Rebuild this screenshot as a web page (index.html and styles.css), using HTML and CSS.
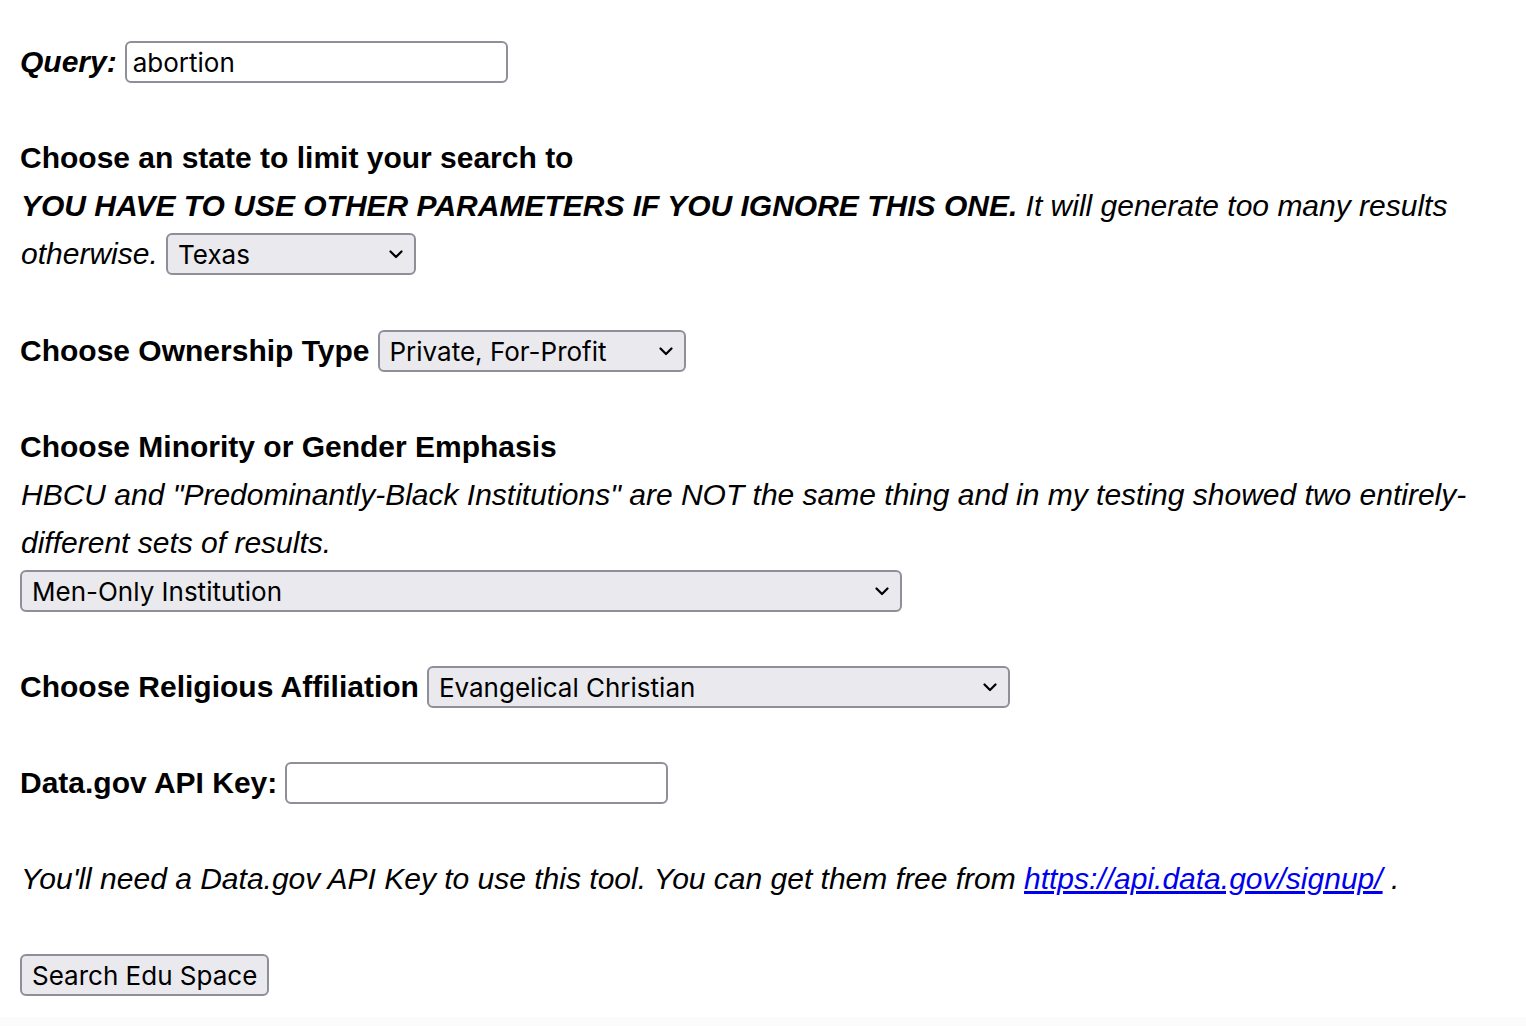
FILE: index.html
```html
<!DOCTYPE html>
<html lang="en">

<head>
    <meta charset="UTF-8">
    <meta name="viewport" content="width=device-width, initial-scale=1.0">
    <title>Edu Space Search</title>
    <link rel="stylesheet" href="styles.css">
</head>

<body>
    <form id="search-form">
        <div class="row">
            <label class="query-label" for="query">Query:</label>
            <input type="text" id="query" class="text-input" value="abortion">
        </div>

        <div>
            <div class="heading">Choose an state to limit your search to</div>
            <div class="note">
                <strong>YOU HAVE TO USE OTHER PARAMETERS IF YOU IGNORE THIS ONE.</strong> It will generate too many results otherwise.
                <span class="select-wrap state-select">
                    <select id="state">
                        <option>Texas</option>
                    </select>
                    <svg class="chevron" viewBox="0 0 14 9"><path d="M1.5 1.5 L7 7 L12.5 1.5" /></svg>
                </span>
            </div>
        </div>

        <div class="row">
            <label class="heading" for="ownership">Choose Ownership Type</label>
            <span class="select-wrap ownership-select">
                <select id="ownership">
                    <option>Private, For-Profit</option>
                </select>
                <svg class="chevron" viewBox="0 0 14 9"><path d="M1.5 1.5 L7 7 L12.5 1.5" /></svg>
            </span>
        </div>

        <div>
            <div class="heading">Choose Minority or Gender Emphasis</div>
            <div class="note">HBCU and "Predominantly-Black Institutions" are NOT the same thing and in my testing showed two entirely-different sets of results.</div>
            <div class="row">
                <span class="select-wrap minority-select">
                    <select id="minority">
                        <option>Men-Only Institution</option>
                    </select>
                    <svg class="chevron" viewBox="0 0 14 9"><path d="M1.5 1.5 L7 7 L12.5 1.5" /></svg>
                </span>
            </div>
        </div>

        <div class="row">
            <label class="heading" for="religion">Choose Religious Affiliation</label>
            <span class="select-wrap religion-select">
                <select id="religion">
                    <option>Evangelical Christian</option>
                </select>
                <svg class="chevron" viewBox="0 0 14 9"><path d="M1.5 1.5 L7 7 L12.5 1.5" /></svg>
            </span>
        </div>

        <div class="row">
            <label class="heading" for="api-key">Data.gov API Key:</label>
            <input type="text" id="api-key" class="text-input">
        </div>

        <div class="note">
            You'll need a Data.gov API Key to use this tool. You can get them free from <a href="#">https://api.data.gov/signup/</a> .
        </div>

        <div class="row">
            <button type="button" id="search-button">Search Edu Space</button>
        </div>
    </form>
    <div id="page-end"></div>
</body>

</html>
```

FILE: styles.css
```css
body {
    font-family: 'Liberation Sans', Arial, sans-serif;
    font-size: 30px;
    line-height: 48px;
    color: #000;
    margin: 0;
    padding: 0;
}

#search-form {
    padding: 38px 20px 0 20px;
    display: flex;
    flex-direction: column;
    gap: 48px;
}

.row {
    display: flex;
    align-items: center;
    gap: 8px;
    height: 48px;
}

.heading {
    font-weight: bold;
}

.query-label {
    font-weight: bold;
    font-style: italic;
}

.note {
    font-style: italic;
    padding-left: 1px;
}

.note strong {
    font-weight: bold;
}

.note a {
    color: #0000ee;
}

/* form controls */
.text-input,
select,
#search-button {
    font-family: Inter, 'Noto Sans', sans-serif;
    font-size: 26px;
    line-height: normal;
    color: #000;
    height: 42px;
    border: 2px solid #8f8f99;
    border-radius: 6px;
    box-sizing: border-box;
    margin: 0;
}

.text-input {
    width: 383px;
    padding: 0 6px;
    background-color: #fff;
}

.select-wrap {
    position: relative;
    display: inline-block;
    vertical-align: middle;
    height: 42px;
    line-height: 0;
}

.state-select {
    margin-bottom: 4px;
    width: 250px;
}

select {
    -webkit-appearance: none;
    appearance: none;
    width: 100%;
    background-color: #e9e9ee;
    padding: 0 10px;
}

.chevron {
    position: absolute;
    right: 13px;
    top: 17px;
    width: 14px;
    height: 9px;
    pointer-events: none;
}

.chevron path {
    fill: none;
    stroke: #000;
    stroke-width: 2.2;
    stroke-linecap: round;
    stroke-linejoin: round;
}

.ownership-select {
    width: 308px;
}

.minority-select {
    width: 882px;
}

.religion-select {
    width: 583px;
}

#search-button {
    width: 249px;
    background-color: #e9e9ee;
    padding: 0 10px;
    text-align: left;
    white-space: nowrap;
}

#page-end {
    height: 20px;
    margin-top: 18px;
    background-color: #fbfbfb;
}
```
